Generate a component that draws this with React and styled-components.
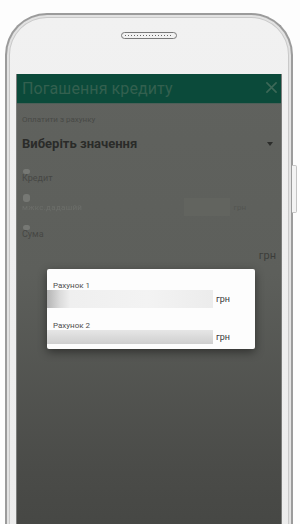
import styled, { createGlobalStyle } from 'styled-components'

const Global = createGlobalStyle`
    html, body{
        margin:0;
        padding:0;
        background:#fff;
    }
    body{
        font-family:Roboto, "Liberation Sans", sans-serif;
    }
`

const Page = styled.div`
    width:300px;
    height:524px;
    overflow:hidden;
    background:#fdfdfd;
    padding:13px 0 0 5px;
    box-sizing:border-box;
`

const Phone = styled.div`
    position:relative;
    width:288px;
    height:560px;
    box-sizing:border-box;
    border:2px solid #9b9b9b;
    border-bottom:none;
    border-radius:42px 42px 0 0;
    background:linear-gradient(180deg, #f1f1f1 0%, #ececec 100%);
    box-shadow:inset 0 0 0 2px #e2e2e2, inset 0 0 0 3px #c9c9c9;
    padding:17px 9px 0 9px;
    display:flex;
    flex-direction:column;
    align-items:center;
`

const Speaker = styled.div`
    width:56px;
    height:7px;
    box-sizing:border-box;
    border:1px solid #7a7a7a;
    border-radius:4px;
    background:repeating-linear-gradient(90deg, #666 0 1px, #f4f4f4 1px 3px);
    background-clip:content-box;
    padding:2px 3px;
    margin-bottom:35px;
`

const SideButton = styled.div`
    position:absolute;
    right:-6px;
    top:150px;
    width:4px;
    height:46px;
    border:1px solid #c4c4c4;
    border-left:none;
    border-radius:0 2px 2px 0;
    background:#f3f3f3;
`

const Screen = styled.div`
    position:relative;
    align-self:stretch;
    flex:1;
    display:flex;
    flex-direction:column;
    background:linear-gradient(180deg, #60625e 0%, #5d5f5b 40%, #4a4b48 80%, #434441 100%);
    border-left:1px solid #7c7d7b;
    border-right:1px solid #7c7d7b;
`

const Header = styled.div`
    height:29px;
    background:#0b4a3a;
    display:flex;
    align-items:center;
    justify-content:space-between;
    padding:0 4px 0 5px;
    border-bottom:1px solid #4d5e57;
`

const Title = styled.h1`
    margin:0;
    font-size:16px;
    font-weight:400;
    color:#33604f;
    letter-spacing:0.1px;
`

const Close = styled.svg`
    width:11px;
    height:11px;
    margin-top:-2px;
`

const Body = styled.div`
    display:flex;
    flex-direction:column;
    padding:0 5px;
`

const Label = styled.div`
    font-size:${p => p.$size || 8}px;
    color:${p => p.$color || '#484946'};
    margin-top:${p => p.$top || 0}px;
    line-height:1;
`

const Row = styled.div`
    display:flex;
    align-items:center;
    justify-content:space-between;
    margin-top:${p => p.$top || 0}px;
`

const Select = styled.div`
    font-size:13px;
    font-weight:700;
    color:#2a2b29;
    line-height:1;
`

const Arrow = styled.div`
    width:0;
    height:0;
    border-left:3px solid transparent;
    border-right:3px solid transparent;
    border-top:4px solid #2c2d2b;
    margin-right:3px;
`

const Dot = styled.div`
    width:7px;
    height:${p => p.$h || 5}px;
    border-radius:3px;
    background:radial-gradient(circle, #767874 0 1px, transparent 1px) 0 0/2px 2px;
    margin-top:${p => p.$top || 0}px;
    margin-left:1px;
`

const Faint = styled.div`
    font-size:8px;
    color:#6c6e6a;
    letter-spacing:0.3px;
    filter:blur(0.4px);
`

const Patch = styled.div`
    width:46px;
    height:18px;
    background:#62645f;
    margin-left:auto;
    margin-right:4px;
`

const Unit = styled.span`
    font-size:${p => p.$size || 8}px;
    color:${p => p.$color || '#4b4c49'};
`

const Spacer = styled.span`
    width:${p => p.$w}px;
`

const Backdrop = styled.div`
    flex:1;
    display:flex;
    flex-direction:column;
    align-items:center;
    padding-top:7px;
`

const Modal = styled.div`
    width:208px;
    box-sizing:border-box;
    background:#fdfdfd;
    border-radius:2px;
    box-shadow:0 3px 10px rgba(0,0,0,0.45);
    padding:13px 0 5px 0;
    margin-left:4px;
`

const Account = styled.div`
    display:flex;
    flex-direction:column;
    margin-bottom:${p => p.$last ? 0 : 14}px;
`

const AccName = styled.div`
    font-size:8px;
    color:#4f4f4f;
    padding-left:6px;
    line-height:1;
`

const AmountRow = styled.div`
    display:flex;
    align-items:center;
    gap:3px;
`

const Blur = styled.div`
    width:166px;
    height:${p => p.$h}px;
    background:${p => p.$bg};
    filter:blur(0.5px);
`

const BottomDots = styled.div`
    position:absolute;
    left:4px;
    right:4px;
    bottom:6px;
    height:2px;
    background:radial-gradient(circle, #2f302e 0 0.8px, transparent 1px) 0 0/5px 2px;
`

function App(){
    return (
        <Page>
            <Global/>
            <Phone>
                <Speaker/>
                <SideButton/>
                <Screen>
                    <Header>
                        <Title>Погашення кредиту</Title>
                        <Close viewBox="0 0 12 12">
                            <path d="M1 1 L11 11 M11 1 L1 11" stroke="#3c6857" strokeWidth="1.8" strokeLinecap="round"/>
                        </Close>
                    </Header>
                    <Body>
                        <Label $top={12}>Оплатити з рахунку</Label>
                        <Row $top={13}>
                            <Select>Виберіть значення</Select>
                            <Arrow/>
                        </Row>
                        <Dot $top={19}/>
                        <Label $size={9} $color="#464744">Кредит</Label>
                        <Dot $top={11} $h={8}/>
                        <Row $top={-4}>
                            <Faint>мжкс.дадашйй</Faint>
                            <Patch/>
                            <Unit $size={8} $color="#535451">грн</Unit>
                            <Spacer $w={30}/>
                        </Row>
                        <Dot $top={9}/>
                        <Label $size={9} $color="#464744">Сума</Label>
                        <Row $top={10}>
                            <span/>
                            <Unit $size={11} $color="#3c3d3a">грн</Unit>
                        </Row>
                    </Body>
                    <Backdrop>
                        <Modal>
                            <Account>
                                <AccName>Рахунок 1</AccName>
                                <AmountRow>
                                    <Blur $h={18} $bg="linear-gradient(90deg, #b4b4b4 0%, #dcdcdc 8%, #efefef 14%, #f3f3f3 60%, #ececec 100%)"/>
                                    <Unit $size={9} $color="#3a3a3a">грн</Unit>
                                </AmountRow>
                            </Account>
                            <Account $last>
                                <AccName>Рахунок 2</AccName>
                                <AmountRow>
                                    <Blur $h={14} $bg="linear-gradient(180deg, #e6e6e6 0%, #cfcfcf 100%), linear-gradient(90deg, #999 0%, #ddd 100%)"/>
                                    <Unit $size={9} $color="#3a3a3a">грн</Unit>
                                </AmountRow>
                            </Account>
                        </Modal>
                    </Backdrop>
                    <BottomDots/>
                </Screen>
            </Phone>
        </Page>
    )
}

export default App
